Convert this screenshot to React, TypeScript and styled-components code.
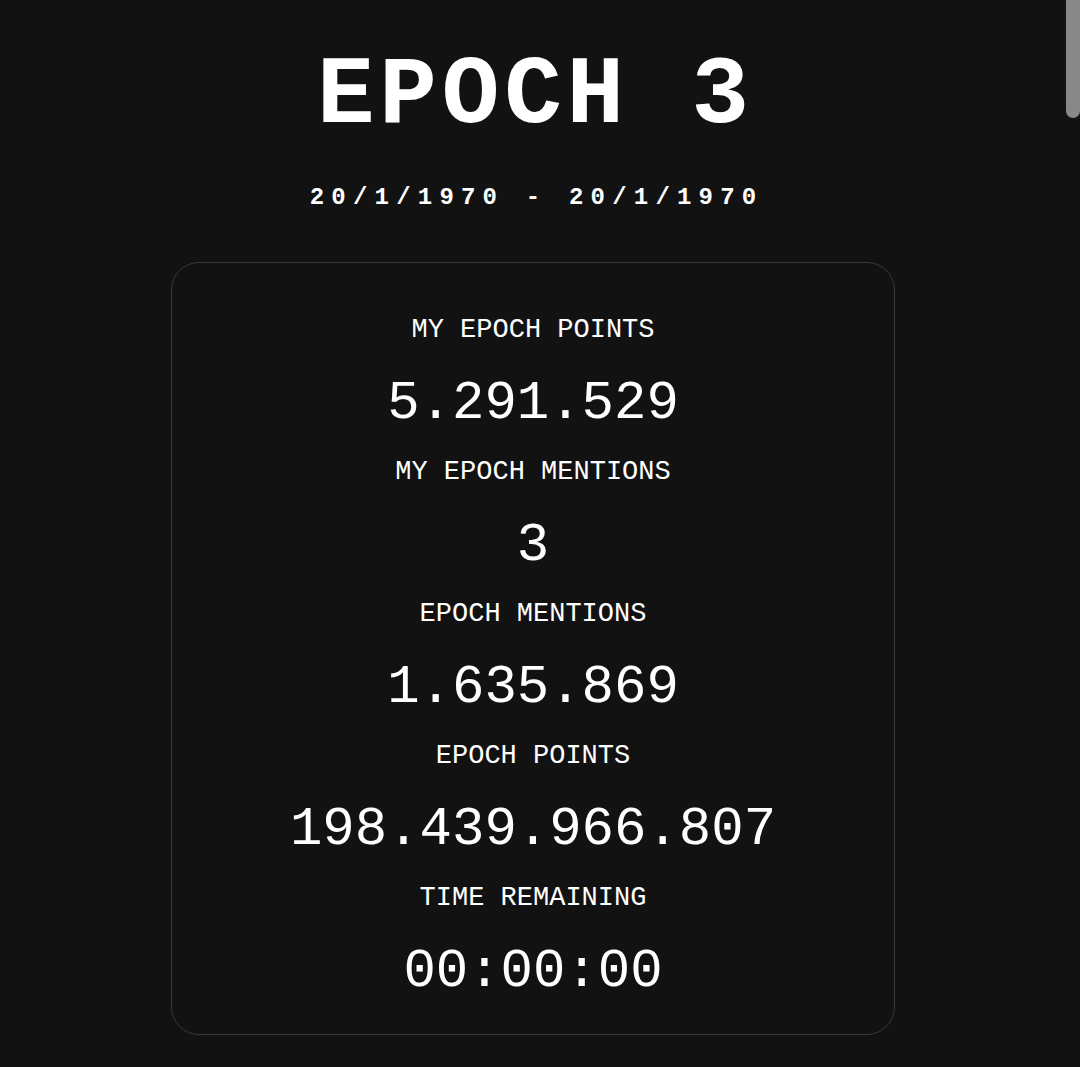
import React from "react";
import styled, { createGlobalStyle } from "styled-components";

const Global = createGlobalStyle`
  html, body {
    margin: 0;
    padding: 0;
    background: #121212;
    color: #ffffff;
    font-family: "Liberation Mono", "DejaVu Sans Mono", monospace;
  }
`;

const Page = styled.main`
  display: flex;
  flex-direction: column;
  align-items: center;
  padding: 49px 14px 32px 0;
  box-sizing: border-box;
`;

const ScrollThumb = styled.div`
  position: fixed;
  top: 0;
  right: 0;
  width: 14px;
  height: 118px;
  background: #888888;
  border-radius: 0 0 7px 7px;
`;

const Title = styled.h1`
  margin: 0;
  font-size: 96px;
  line-height: 96px;
  font-weight: 700;
  letter-spacing: 0.05em;
  padding-left: 0.05em;
`;

const DateRange = styled.div`
  margin-top: 39px;
  font-size: 24px;
  line-height: 28px;
  font-weight: 700;
  letter-spacing: 0.3em;
  padding-left: 0.3em;
`;

const Card = styled.section`
  margin-top: 50px;
  width: 724px;
  box-sizing: border-box;
  border: 1px solid #3a3a3a;
  border-radius: 28px;
  padding: 49px 0 30px;
  display: flex;
  flex-direction: column;
  align-items: center;
`;

const Label = styled.div<{ $first?: boolean }>`
  margin-top: ${(p) => (p.$first ? "0" : "18px")};
  font-size: 27px;
  line-height: 36px;
  text-transform: uppercase;
`;

const Value = styled.div`
  margin-top: 24px;
  font-size: 54px;
  line-height: 64px;
`;

const stats = [
  { label: "My Epoch Points", value: "5.291.529" },
  { label: "My Epoch Mentions", value: "3" },
  { label: "Epoch Mentions", value: "1.635.869" },
  { label: "Epoch Points", value: "198.439.966.807" },
  { label: "Time Remaining", value: "00:00:00" },
];

export default function App() {
  return (
    <>
      <Global />
      <ScrollThumb />
      <Page>
        <Title>EPOCH 3</Title>
        <DateRange>20/1/1970 - 20/1/1970</DateRange>
        <Card>
          {stats.map((s, i) => (
            <React.Fragment key={s.label}>
              <Label $first={i === 0}>{s.label}</Label>
              <Value>{s.value}</Value>
            </React.Fragment>
          ))}
        </Card>
      </Page>
    </>
  );
}
